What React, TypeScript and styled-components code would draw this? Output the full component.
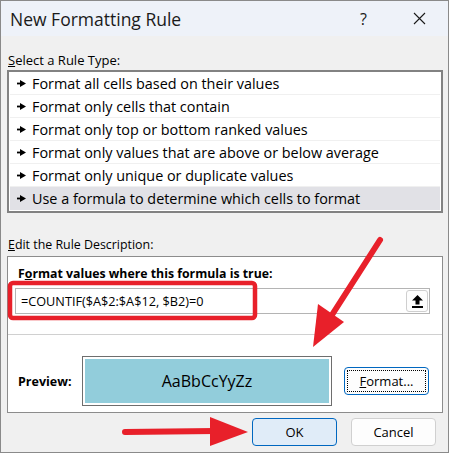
import styled, { createGlobalStyle } from "styled-components";

const GlobalStyle = createGlobalStyle`
  * { box-sizing: border-box; }
  body {
    margin: 0;
    background: #ffffff;
    font-family: "Open Sans", "Noto Sans", sans-serif;
    color: #000;
  }
`;

const ruleTypes = [
  "Format all cells based on their values",
  "Format only cells that contain",
  "Format only top or bottom ranked values",
  "Format only values that are above or below average",
  "Format only unique or duplicate values",
  "Use a formula to determine which cells to format",
];

function Pointer() {
  return (
    <svg width="9" height="7" viewBox="0 0 9 7">
      <rect x="0" y="2.6" width="4" height="1.8" fill="#000" />
      <path d="M3 0 L9 3.5 L3 7 Z" fill="#000" />
    </svg>
  );
}

export default function App() {
  return (
    <>
      <GlobalStyle />
      <Window>
        <TitleBar>
          <Title>New Formatting Rule</Title>
          <TitleButtons>
            <Help>?</Help>
            <svg width="13" height="13" viewBox="0 0 13 13">
              <path d="M1 1 L12 12 M12 1 L1 12" stroke="#1a1a1a" strokeWidth="1.1" />
            </svg>
          </TitleButtons>
        </TitleBar>
        <Body>
          <Label>
            <u>S</u>elect a Rule Type:
          </Label>
          <RuleList>
            {ruleTypes.map((rule, i) => (
              <RuleRow key={rule} selected={i === ruleTypes.length - 1}>
                <Pointer />
                <span>{rule}</span>
              </RuleRow>
            ))}
          </RuleList>
          <Label className="edit">
            <u>E</u>dit the Rule Description:
          </Label>
          <Description>
            <BoldLabel>
              F<u>o</u>rmat values where this formula is true:
            </BoldLabel>
            <FormulaRow>
              <FormulaInput>=COUNTIF($A$2:$A$12, $B2)=0</FormulaInput>
              <CollapseButton>
                <svg width="11" height="13" viewBox="0 0 11 13">
                  <path d="M5.5 0 L11 5.5 L7.5 5.5 L7.5 9.5 L3.5 9.5 L3.5 5.5 L0 5.5 Z" fill="#000" />
                  <rect x="0" y="11" width="11" height="2" fill="#000" />
                </svg>
              </CollapseButton>
            </FormulaRow>
            <Divider />
            <PreviewRow>
              <BoldLabel>Preview:</BoldLabel>
              <PreviewBox>
                <PreviewFill>AaBbCcYyZz</PreviewFill>
              </PreviewBox>
              <FormatButton>
                <span>
                  <u>F</u>ormat...
                </span>
              </FormatButton>
            </PreviewRow>
          </Description>
          <ButtonRow>
            <DialogButton primary>OK</DialogButton>
            <DialogButton>Cancel</DialogButton>
          </ButtonRow>
        </Body>
        <Annotations width="450" height="455" viewBox="0 0 450 455">
          <rect
            x="10"
            y="283"
            width="245"
            height="35"
            rx="3"
            fill="none"
            stroke="#e8202a"
            strokeWidth="4.5"
          />
          <path d="M380 240 L330 318" stroke="#e8202a" strokeWidth="6" strokeLinecap="round" />
          <path d="M313 347 L318 304 L344 322 Z" fill="#e8202a" />
          <path d="M125 432 L215 431" stroke="#e8202a" strokeWidth="6" strokeLinecap="round" />
          <path d="M210 417 L248 432 L210 446 Z" fill="#e8202a" />
        </Annotations>
      </Window>
    </>
  );
}

const Window = styled.div`
  position: relative;
  width: 449px;
  height: 453px;
  border: 1px solid #8a8a8a;
  background: #f0f0f0;
  display: flex;
  flex-direction: column;
  overflow: hidden;
`;

const TitleBar = styled.div`
  height: 35px;
  background: #eef2f9;
  display: flex;
  align-items: center;
  justify-content: space-between;
  padding: 0 22px 0 9px;
`;

const Title = styled.div`
  font-size: 17.5px;
  color: #1a1a1a;
`;

const TitleButtons = styled.div`
  display: flex;
  align-items: center;
  gap: 46px;
`;

const Help = styled.div`
  font-size: 16px;
  color: #1a1a1a;
`;

const Body = styled.div`
  flex: 1;
  padding: 14px 5px 0 6px;
  display: flex;
  flex-direction: column;
`;

const Label = styled.div`
  font-size: 13px;
  height: 20px;
  line-height: 20px;
  padding-left: 1px;

  &.edit {
    margin-top: 22px;
    font-size: 12.4px;
  }
`;

const RuleList = styled.div`
  border: 2px solid #828282;
  background: #fff;
  padding: 0 1px 1px;
  display: flex;
  flex-direction: column;
`;

const RuleRow = styled.div<{ selected?: boolean }>`
  height: 23px;
  display: flex;
  align-items: center;
  gap: 6px;
  padding-left: 7px;
  font-size: 14.4px;
  background: ${({ selected }) => (selected ? "#e1e1e6" : "#fff")};
  border-bottom: ${({ selected }) => (selected ? "none" : "1px solid #f0f0f0")};
`;

const Description = styled.div`
  margin-top: 1px;
  height: 157px;
  border: 1px solid #8c8c8c;
  background: #fff;
  display: flex;
  flex-direction: column;
`;

const BoldLabel = styled.div`
  font-size: 12.3px;
  font-weight: 700;
  padding: 8px 0 0 10px;
  height: 31px;
`;

const FormulaRow = styled.div`
  margin: 0 12px 0 7px;
  height: 26px;
  border: 1px solid #b4b4b4;
  display: flex;
  align-items: center;
  justify-content: space-between;
  padding: 0 1px 0 5px;
`;

const FormulaInput = styled.div`
  font-size: 12.7px;
`;

const CollapseButton = styled.div`
  width: 22px;
  height: 22px;
  border: 1px solid #cfcfcf;
  border-radius: 3px;
  background: #fdfdfd;
  display: flex;
  align-items: center;
  justify-content: center;
`;

const Divider = styled.div`
  margin: 20px 0 0 0;
  height: 1px;
  background: #d0d0d0;
`;

const PreviewRow = styled.div`
  display: flex;
  align-items: center;
  margin-top: 21px;

  ${BoldLabel} {
    padding: 0 0 0 10px;
    height: auto;
    width: 74px;
    font-size: 12.5px;
  }
`;

const PreviewBox = styled.div`
  width: 250px;
  height: 50px;
  border: 1px solid #6e6e6e;
  padding: 2px;
  background: #fff;
`;

const PreviewFill = styled.div`
  height: 100%;
  background: #92cddb;
  display: flex;
  align-items: center;
  justify-content: center;
  font-size: 16px;
`;

const FormatButton = styled.div`
  margin-left: 12px;
  width: 85px;
  height: 28px;
  border: 1px solid #0067c0;
  border-radius: 4px;
  background: #fdfdfd;
  padding: 2px;
  font-size: 13px;

  span {
    display: flex;
    align-items: center;
    justify-content: center;
    height: 100%;
    border: 1px dotted #000;
  }
`;

const ButtonRow = styled.div`
  display: flex;
  justify-content: flex-end;
  gap: 14px;
  padding: 5px 7px 0 0;
`;

const DialogButton = styled.div<{ primary?: boolean }>`
  width: 85px;
  height: 28px;
  border-radius: 4px;
  border: 1px solid ${({ primary }) => (primary ? "#0067c0" : "#d0d0d0")};
  background: ${({ primary }) => (primary ? "#e0ecf8" : "#fdfdfd")};
  display: flex;
  align-items: center;
  justify-content: center;
  font-size: 13px;
`;

const Annotations = styled.svg`
  position: absolute;
  left: -1px;
  top: -1px;
  pointer-events: none;
`;
